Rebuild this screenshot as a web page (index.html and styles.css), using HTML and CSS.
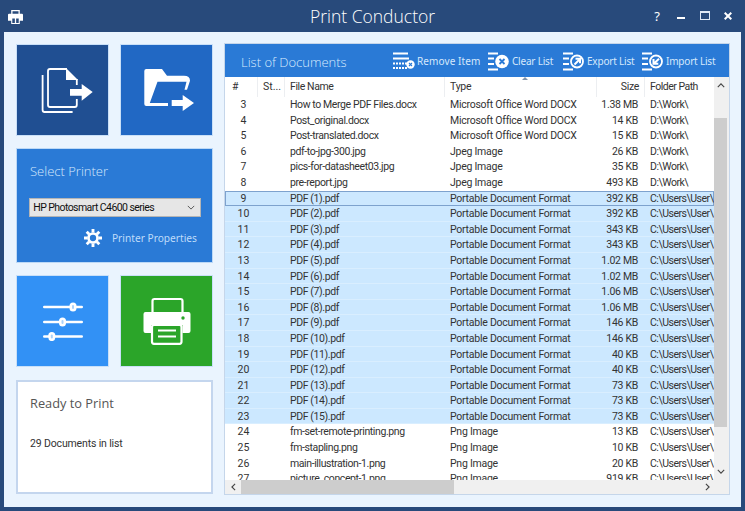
FILE: index.html
```html
<!DOCTYPE html>
<html lang="en">
<head>
<meta charset="utf-8">
<title>Print Conductor</title>
<link rel="stylesheet" href="styles.css">
</head>
<body>
<div class="window">
  <header class="titlebar">
    <svg class="app-icon" viewBox="0 0 14 13"><path fill="#fff" fill-rule="evenodd" d="M3 0h8v3.500h2q1 0 1 1V10h-3v3H3v-3H0V4.500q0-1 1-1h2zM4.200 1.200v2.300h5.600V1.200zM4 8v4h2.400V8zM7.600 8v4H10V8z"/></svg>
    <h1 class="app-title">Print Conductor</h1>
    <div class="window-controls">
      <span class="help">?</span>
      <span class="minimize"></span>
      <span class="maximize"></span>
      <svg class="close" viewBox="0 0 8 8"><path d="M.7.7l6.600 6.600M7.300.7L.7 7.300" stroke="#fff" stroke-width="2"/></svg>
    </div>
  </header>
  <main class="content">
    <aside class="sidebar">
      <div class="tile-row">
        <button class="tile tile-navy" aria-label="Add documents">
          <svg class="tile-art" viewBox="0 0 93 92"><g fill="none" stroke="#fff" stroke-width="1.800"><path d="M26.600 31v35q0 2 2 2h28"/><path d="M60.800 41V35M60.800 55v6q0 2-2 2H34q-2 0-2-2V27q0-2 2-2h17"/></g><path fill="#fff" d="M50 24l12 12H50z"/><path fill="#fff" d="M54 45h11.700v-5l11 8-11 8.700v-5H54z"/></svg>
        </button>
        <button class="tile tile-blue" aria-label="Add folder">
          <svg class="tile-art" viewBox="0 0 93 92"><path fill="#fff" d="M24.300 27q0-2 2-2H42l5 6.700h17q6 0 6 5l-3 9h-2.500l2-8H37.500L29.800 59H48v3H26.300q-2 0-2-2z"/><path fill="#fff" d="M51.700 56h11v-5L74 59l-11.300 8v-5h-11z"/></svg>
        </button>
      </div>
      <section class="printer-card">
        <h2 class="card-title">Select Printer</h2>
        <div class="printer-select"><span>HP Photosmart C4600 series</span><svg viewBox="0 0 10 6"><path d="M1 1l4 4 4-4" fill="none" stroke="#555" stroke-width="1.200"/></svg></div>
        <div class="printer-props">
          <svg viewBox="0 0 20 20"><circle cx="10" cy="10" r="5" fill="none" stroke="#fff" stroke-width="3"/><g stroke="#fff" stroke-width="3.200"><path d="M10 0v4M10 16v4M0 10h4M16 10h4M3 3l2.800 2.800M14.200 14.200L17 17M17 3l-2.800 2.800M5.800 14.200L3 17"/></g></svg>
          <span>Printer Properties</span>
        </div>
      </section>
      <div class="tile-row tile-row-low">
        <button class="tile tile-sky" aria-label="Settings">
          <svg class="sliders" viewBox="0 0 40 39"><g stroke="#fff" stroke-width="2.400" stroke-linecap="round"><path d="M1.200 5h37.600M1.200 20h37.600M1.200 34.500h37.600"/></g><g fill="#fff"><rect x="26.500" y=".4" width="7" height="9.200" rx="3.500"/><rect x="16" y="15.400" width="7" height="9.200" rx="3.500"/><rect x="5.300" y="29.900" width="7" height="9.200" rx="3.500"/></g><g fill="#a9d2fb"><rect x="29" y="3" width="2" height="4" rx="1"/><rect x="18.500" y="18" width="2" height="4" rx="1"/><rect x="7.800" y="32.500" width="2" height="4" rx="1"/></g></svg>
        </button>
        <button class="tile tile-green" aria-label="Print">
          <svg class="printer-icon" viewBox="0 0 48 48"><path fill="none" stroke="#fff" stroke-width="2.200" d="M9.500 15V4q0-2 2-2h26q2 0 2 2v11"/><path fill="#fff" d="M2.500 15h43q2 0 2 2v17q0 2-2 2h-6V28H8v8H2.500q-2 0-2-2V17q0-2 2-2z"/><circle cx="40" cy="21" r="1.700" fill="#2ba529"/><rect x="9" y="28" width="29.500" height="18.800" rx="2" fill="#2ba529" stroke="#fff" stroke-width="2.200"/><path d="M15 33.500h18M15 39.500h18" stroke="#fff" stroke-width="1.800"/></svg>
        </button>
      </div>
      <section class="status-card">
        <h2 class="status-title">Ready to Print</h2>
        <p class="status-text">29 Documents in list</p>
      </section>
    </aside>
    <section class="list-panel">
      <div class="list-header">
        <h2 class="list-title">List of Documents</h2>
        <div class="toolbar">
          <span class="tool tool-remove">
            <svg class="icon-remove" viewBox="0 0 22 18"><g stroke="#fff" stroke-width="1.800"><path d="M0 1.500h15M0 6.500h16"/><path d="M0 11.500h14" stroke-dasharray="2 1"/><path d="M0 16h14" stroke-dasharray="2 1"/></g><circle cx="17.500" cy="12.500" r="4.200" fill="#fff"/><path d="M16 11l3 3M19 11l-3 3" stroke="#2a7ad6" stroke-width="1.100"/></svg>
            Remove Item
          </span>
          <span class="tool tool-clear">
            <svg viewBox="0 0 21 19"><g stroke="#fff" stroke-width="1.800"><path d="M0 1.500h10M0 6.500h6M0 12h6M0 17.500h10"/></g><circle cx="14" cy="9.500" r="6.800" fill="#fff"/><path d="M11.500 7l5 5M16.500 7l-5 5" stroke="#2a7ad6" stroke-width="1.800"/></svg>
            Clear List
          </span>
          <span class="tool tool-export">
            <svg viewBox="0 0 21 19"><g stroke="#fff" stroke-width="1.800"><path d="M0 1.500h10M0 6.500h6M0 12h6M0 17.500h10"/></g><circle cx="14" cy="9.500" r="6" fill="none" stroke="#fff" stroke-width="1.800"/><path d="M11.500 12.500l4.500-4.500M12.500 6.800H17v4.500" stroke="#fff" stroke-width="2" fill="none"/></svg>
            Export List
          </span>
          <span class="tool tool-import">
            <svg viewBox="0 0 21 19"><g stroke="#fff" stroke-width="1.800"><path d="M0 1.500h10M0 6.500h6M0 12h6M0 17.500h10"/></g><circle cx="14" cy="9.500" r="6" fill="none" stroke="#fff" stroke-width="1.800"/><path d="M17 6.800L12.500 11M11.500 7v4.800h4.800" stroke="#fff" stroke-width="2" fill="none"/></svg>
            Import List
          </span>
        </div>
      </div>
      <div class="list-body">
        <div class="table-wrap">
          <div class="row head">
            <span class="c-num">#</span><span class="c-st">St...</span><span class="c-name">File Name</span><span class="c-type">Type</span><span class="c-size">Size</span><span class="c-path">Folder Path</span>
            <svg class="sort" viewBox="0 0 6 3"><path d="M3 0l3 3H0z" fill="#7f93ab"/></svg>
          </div>
          <div class="rows">
            <div class="row"><span class="c-num">3</span><span class="c-st"></span><span class="c-name">How to Merge PDF Files.docx</span><span class="c-type">Microsoft Office Word DOCX</span><span class="c-size">1.38 MB</span><span class="c-path">D:\Work\</span></div>
            <div class="row"><span class="c-num">4</span><span class="c-st"></span><span class="c-name">Post_original.docx</span><span class="c-type">Microsoft Office Word DOCX</span><span class="c-size">14 KB</span><span class="c-path">D:\Work\</span></div>
            <div class="row"><span class="c-num">5</span><span class="c-st"></span><span class="c-name">Post-translated.docx</span><span class="c-type">Microsoft Office Word DOCX</span><span class="c-size">15 KB</span><span class="c-path">D:\Work\</span></div>
            <div class="row"><span class="c-num">6</span><span class="c-st"></span><span class="c-name">pdf-to-jpg-300.jpg</span><span class="c-type">Jpeg Image</span><span class="c-size">26 KB</span><span class="c-path">D:\Work\</span></div>
            <div class="row"><span class="c-num">7</span><span class="c-st"></span><span class="c-name">pics-for-datasheet03.jpg</span><span class="c-type">Jpeg Image</span><span class="c-size">35 KB</span><span class="c-path">D:\Work\</span></div>
            <div class="row"><span class="c-num">8</span><span class="c-st"></span><span class="c-name">pre-report.jpg</span><span class="c-type">Jpeg Image</span><span class="c-size">493 KB</span><span class="c-path">D:\Work\</span></div>
            <div class="row sel focus"><span class="c-num">9</span><span class="c-st"></span><span class="c-name">PDF (1).pdf</span><span class="c-type">Portable Document Format</span><span class="c-size">392 KB</span><span class="c-path">C:\Users\User\</span></div>
            <div class="row sel"><span class="c-num">10</span><span class="c-st"></span><span class="c-name">PDF (2).pdf</span><span class="c-type">Portable Document Format</span><span class="c-size">392 KB</span><span class="c-path">C:\Users\User\</span></div>
            <div class="row sel"><span class="c-num">11</span><span class="c-st"></span><span class="c-name">PDF (3).pdf</span><span class="c-type">Portable Document Format</span><span class="c-size">343 KB</span><span class="c-path">C:\Users\User\</span></div>
            <div class="row sel"><span class="c-num">12</span><span class="c-st"></span><span class="c-name">PDF (4).pdf</span><span class="c-type">Portable Document Format</span><span class="c-size">343 KB</span><span class="c-path">C:\Users\User\</span></div>
            <div class="row sel"><span class="c-num">13</span><span class="c-st"></span><span class="c-name">PDF (5).pdf</span><span class="c-type">Portable Document Format</span><span class="c-size">1.02 MB</span><span class="c-path">C:\Users\User\</span></div>
            <div class="row sel"><span class="c-num">14</span><span class="c-st"></span><span class="c-name">PDF (6).pdf</span><span class="c-type">Portable Document Format</span><span class="c-size">1.02 MB</span><span class="c-path">C:\Users\User\</span></div>
            <div class="row sel"><span class="c-num">15</span><span class="c-st"></span><span class="c-name">PDF (7).pdf</span><span class="c-type">Portable Document Format</span><span class="c-size">1.06 MB</span><span class="c-path">C:\Users\User\</span></div>
            <div class="row sel"><span class="c-num">16</span><span class="c-st"></span><span class="c-name">PDF (8).pdf</span><span class="c-type">Portable Document Format</span><span class="c-size">1.06 MB</span><span class="c-path">C:\Users\User\</span></div>
            <div class="row sel"><span class="c-num">17</span><span class="c-st"></span><span class="c-name">PDF (9).pdf</span><span class="c-type">Portable Document Format</span><span class="c-size">146 KB</span><span class="c-path">C:\Users\User\</span></div>
            <div class="row sel"><span class="c-num">18</span><span class="c-st"></span><span class="c-name">PDF (10).pdf</span><span class="c-type">Portable Document Format</span><span class="c-size">146 KB</span><span class="c-path">C:\Users\User\</span></div>
            <div class="row sel"><span class="c-num">19</span><span class="c-st"></span><span class="c-name">PDF (11).pdf</span><span class="c-type">Portable Document Format</span><span class="c-size">40 KB</span><span class="c-path">C:\Users\User\</span></div>
            <div class="row sel"><span class="c-num">20</span><span class="c-st"></span><span class="c-name">PDF (12).pdf</span><span class="c-type">Portable Document Format</span><span class="c-size">40 KB</span><span class="c-path">C:\Users\User\</span></div>
            <div class="row sel"><span class="c-num">21</span><span class="c-st"></span><span class="c-name">PDF (13).pdf</span><span class="c-type">Portable Document Format</span><span class="c-size">73 KB</span><span class="c-path">C:\Users\User\</span></div>
            <div class="row sel"><span class="c-num">22</span><span class="c-st"></span><span class="c-name">PDF (14).pdf</span><span class="c-type">Portable Document Format</span><span class="c-size">73 KB</span><span class="c-path">C:\Users\User\</span></div>
            <div class="row sel"><span class="c-num">23</span><span class="c-st"></span><span class="c-name">PDF (15).pdf</span><span class="c-type">Portable Document Format</span><span class="c-size">73 KB</span><span class="c-path">C:\Users\User\</span></div>
            <div class="row"><span class="c-num">24</span><span class="c-st"></span><span class="c-name">fm-set-remote-printing.png</span><span class="c-type">Png Image</span><span class="c-size">13 KB</span><span class="c-path">C:\Users\User\</span></div>
            <div class="row"><span class="c-num">25</span><span class="c-st"></span><span class="c-name">fm-stapling.png</span><span class="c-type">Png Image</span><span class="c-size">10 KB</span><span class="c-path">C:\Users\User\</span></div>
            <div class="row"><span class="c-num">26</span><span class="c-st"></span><span class="c-name">main-illustration-1.png</span><span class="c-type">Png Image</span><span class="c-size">20 KB</span><span class="c-path">C:\Users\User\</span></div>
            <div class="row"><span class="c-num">27</span><span class="c-st"></span><span class="c-name">picture_concept-1.png</span><span class="c-type">Png Image</span><span class="c-size">919 KB</span><span class="c-path">C:\Users\User\</span></div>
          </div>
        </div>
        <div class="vscroll">
          <svg viewBox="0 0 10 6"><path d="M1 5l4-4 4 4" fill="none" stroke="#444" stroke-width="1.400"/></svg>
          <div class="vtrack"><div class="vthumb"></div></div>
          <svg viewBox="0 0 10 6"><path d="M1 1l4 4 4-4" fill="none" stroke="#444" stroke-width="1.400"/></svg>
        </div>
        <div class="hscroll">
          <svg viewBox="0 0 6 10"><path d="M5 1L1 5l4 4" fill="none" stroke="#444" stroke-width="1.400"/></svg>
          <div class="htrack"><div class="hthumb"></div></div>
          <svg viewBox="0 0 6 10"><path d="M1 1l4 4-4 4" fill="none" stroke="#444" stroke-width="1.400"/></svg>
        </div>
      </div>
    </section>
  </main>
</div>
</body>
</html>
```

FILE: styles.css
```css
* { box-sizing: border-box; }
html, body { margin: 0; padding: 0; }
body { width: 745px; height: 511px; overflow: hidden; font-family: Roboto, "Liberation Sans", sans-serif; }
button { border: 0; padding: 0; margin: 0; cursor: pointer; }
h1, h2, p { margin: 0; font-weight: 300; }

.window { width: 745px; height: 511px; background: #284a7b; padding: 0 4px 4.500px; display: flex; flex-direction: column; }

.titlebar { height: 32px; flex: none; display: flex; align-items: center; position: relative; }
.app-icon { width: 15px; height: 14px; margin-left: 4px; flex: none; margin-top: 1px; }
.app-title { flex: 1; text-align: center; font-family: "Open Sans", sans-serif; font-size: 17.500px; font-weight: 300; color: #fff; padding-right: 19px; }
.window-controls { position: absolute; right: 0; top: 0; height: 32px; width: 100px; }
.help { color: #fff; font-family: "Noto Sans", sans-serif; font-size: 13px; width: 12px; text-align: center; position: absolute; right: 78px; top: 7px; line-height: 18px; }
.minimize { position: absolute; right: 56px; top: 17px; width: 8.500px; height: 2px; background: #fff; }
.maximize { position: absolute; right: 31px; top: 11px; width: 10px; height: 9px; border: 1px solid #dfe9f6; border-top-width: 2px; }
.close { position: absolute; right: 9px; top: 12px; width: 8px; height: 8px; }

.content { flex: 1; background: #eaf4fe; padding: 12px; display: flex; gap: 12px; min-height: 0; }

.sidebar { width: 197px; flex: none; display: flex; flex-direction: column; gap: 12px; }
.tile-row { display: flex; gap: 11px; height: 92px; flex: none; }
.tile { width: 93px; height: 92px; display: flex; align-items: center; justify-content: center; outline: 1px solid #c9e0f8; outline-offset: -1px; }
.tile-navy { background: #204f92; }
.tile-blue { background: #2168c4; }
.tile-sky { background: #3291f5; }
.tile-green { background: #2ba529; }
.tile-art { width: 93px; height: 92px; display: block; }
.sliders { width: 40px; height: 39px; }
.printer-icon { width: 48px; height: 48px; }

.printer-card { height: 115px; flex: none; background: #2a7ad6; outline: 1px solid #bcd9f7; outline-offset: -1px; padding: 14px 12px 0 14px; }
.card-title { font-family: "Open Sans", sans-serif; font-size: 13px; font-weight: 300; color: #d5e8fc; line-height: 18px; }
.printer-select { margin-top: 17.500px; margin-left: -.700px; height: 19px; background: #e6e6e6; border: 1px solid #b5b5b5; display: flex; align-items: center; justify-content: space-between; padding: 0 5px 0 3px; font-size: 10.500px; letter-spacing: -.58px; color: #111; width: 171.500px; }
.printer-select svg { width: 8px; height: 5px; }
.printer-props { display: flex; align-items: center; justify-content: flex-end; gap: 10px; margin-top: 12px; margin-right: 4px; font-family: "Noto Sans", sans-serif; font-size: 10.200px; color: #bfdcfa; }
.printer-props svg { width: 18px; height: 18px; }

.tile-row-low { margin-top: 0; }
.status-card { height: 114px; flex: none; background: #fff; border: 2px solid #c4d6ee; padding: 12px 12px; margin-top: 1px; }
.status-title { font-family: "Open Sans", sans-serif; font-size: 12.800px; font-weight: 400; color: #555; line-height: 18px; }
.status-text { margin-top: 25px; font-size: 10.500px; font-weight: 400; letter-spacing: -.15px; color: #333; line-height: 14px; }

.list-panel { width: 504px; flex: none; display: flex; flex-direction: column; height: 450px; box-shadow: 0 0 0 1px #c5d6ea; }
.list-header { height: 33px; flex: none; background: #2a7ad6; display: flex; align-items: center; padding-left: 16px; }
.list-title { font-family: "Open Sans", sans-serif; font-size: 13px; font-weight: 300; color: #d8eafd; width: 152px; padding-top: 3px; flex: none; }
.toolbar { display: flex; align-items: center; color: #d5e8fc; font-family: "Noto Sans", sans-serif; font-size: 10px; margin-top: 1px; letter-spacing: -.2px; }
.tool { display: flex; align-items: center; gap: 3px; white-space: nowrap; }
.tool svg { width: 21px; height: 19px; flex: none; }
.tool .icon-remove { width: 22px; height: 18px; }
.tool-remove { width: 95px; gap: 2px; letter-spacing: .1px; }
.tool-clear { width: 75px; }
.tool-export { width: 79px; }
.tool-import { width: 72px; }

.list-body { flex: 1; display: grid; grid-template-columns: 489px 15px; grid-template-rows: 403px 14px; background: #f0f0f0; min-height: 0; }
.table-wrap { background: #fff; overflow: hidden; }
.row { display: flex; height: 15.600px; font-size: 10.500px; line-height: 15.600px; color: #333; white-space: nowrap; position: relative; width: 489px; }
.row span { display: block; flex: none; overflow: hidden; }
.head { height: 20px; line-height: 19px; }
.head span { border-right: 1px solid #eceef1; }
.c-num { width: 33px; text-align: center; padding-left: 4px; }
.c-st { width: 27px; padding-left: 5px; }
.c-name { width: 160px; padding-left: 5px; letter-spacing: -.4px; }
.c-type { width: 152px; padding-left: 5px; letter-spacing: -.25px; }
.c-size { width: 48px; text-align: right; padding-right: 7px; letter-spacing: -.3px; }
.c-path { width: 69px; padding-left: 5px; letter-spacing: -.5px; }
.head .c-num { text-align: left; padding-left: 7px; }
.head .c-path { border-right: 0; }
.head .c-size { padding-right: 5px; }
.sort { position: absolute; left: 297px; top: 0; width: 6px; height: 3px; }
.sel { background: #cce8ff; box-shadow: inset 0 -1px 0 #d9eeff; }
.focus { box-shadow: inset 0 0 0 1px #7da2ce; }

.vscroll { grid-column: 2; grid-row: 1; background: #f0f0f0; display: flex; flex-direction: column; align-items: center; padding: 6px 2px 6px 0; }
.vscroll svg { width: 8px; height: 5px; flex: none; }
.vtrack { flex: 1; width: 100%; padding-top: 30px; }
.vthumb { background: #cdcdcd; height: 309px; }
.hscroll { grid-column: 1 / 3; grid-row: 2; background: #f0f0f0; display: flex; align-items: center; padding: 0 19px 0 6px; }
.hscroll svg { width: 5px; height: 8px; flex: none; }
.htrack { flex: 1; height: 100%; padding-left: 5px; }
.hthumb { background: #cdcdcd; width: 213px; height: 100%; }
```
